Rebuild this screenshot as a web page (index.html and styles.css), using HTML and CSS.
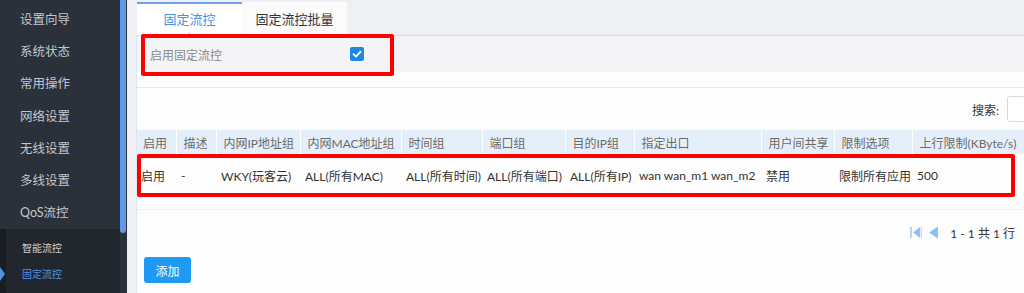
FILE: index.html
```html
<!DOCTYPE html>
<html lang="zh-CN">

<head>
    <meta charset="UTF-8">
    <meta name="viewport" content="width=device-width, initial-scale=1.0">
    <title>固定流控</title>
    <link rel="stylesheet" href="styles.css">
</head>

<body>
    <div class="layout">
        <aside class="sidebar">
            <ul class="menu">
                <li>设置向导</li>
                <li>系统状态</li>
                <li>常用操作</li>
                <li>网络设置</li>
                <li>无线设置</li>
                <li>多线设置</li>
                <li>QoS流控</li>
            </ul>
            <ul class="submenu">
                <li>智能流控</li>
                <li class="active">固定流控</li>
            </ul>
        </aside>
        <div class="scrollbar">
            <div class="thumb"></div>
        </div>

        <main class="main">
            <div class="tabs">
                <a href="#" class="tab active">固定流控</a>
                <a href="#" class="tab">固定流控批量</a>
            </div>

            <div class="panel">
                <div class="enable-row">
                    <label class="enable-label">启用固定流控</label>
                    <span class="checkbox">
                        <svg width="10" height="10" viewBox="0 0 10 10">
                            <path d="M1.5 5.2 L4 7.6 L8.6 2.6" fill="none" stroke="#fff" stroke-width="1.8" stroke-linecap="round" stroke-linejoin="round"/>
                        </svg>
                    </span>
                    <span class="mark mark-enable"></span>
                </div>

                <div class="table-box">
                    <div class="search">
                        <span>搜索:</span>
                        <input type="text" class="search-input">
                    </div>

                    <div class="table-wrap">
                        <table class="grid">
                            <colgroup>
                                <col style="width: 39px">
                                <col style="width: 40px">
                                <col style="width: 84px">
                                <col style="width: 101px">
                                <col style="width: 81px">
                                <col style="width: 83px">
                                <col style="width: 69px">
                                <col style="width: 127px">
                                <col style="width: 73px">
                                <col style="width: 78px">
                                <col style="width: 150px">
                            </colgroup>
                            <thead>
                                <tr>
                                    <th>启用</th>
                                    <th>描述</th>
                                    <th>内网IP地址组</th>
                                    <th>内网MAC地址组</th>
                                    <th>时间组</th>
                                    <th>端口组</th>
                                    <th>目的IP组</th>
                                    <th>指定出口</th>
                                    <th>用户间共享</th>
                                    <th>限制选项</th>
                                    <th>上行限制(KByte/s)</th>
                                </tr>
                            </thead>
                            <tbody>
                                <tr>
                                    <td>启用</td>
                                    <td>-</td>
                                    <td>WKY(玩客云)</td>
                                    <td>ALL(所有MAC)</td>
                                    <td>ALL(所有时间)</td>
                                    <td>ALL(所有端口)</td>
                                    <td>ALL(所有IP)</td>
                                    <td>wan wan_m1 wan_m2</td>
                                    <td>禁用</td>
                                    <td>限制所有应用</td>
                                    <td>500</td>
                                </tr>
                            </tbody>
                        </table>
                        <span class="mark mark-row"></span>
                    </div>

                    <div class="pager">
                        <svg class="pager-icon" width="13" height="13" viewBox="0 0 13 13">
                            <rect x="0" y="1" width="2" height="11" fill="#b3d6f6"/>
                            <path d="M3 6.5 L10 1 L10 12 Z" fill="#8cc2f2"/>
                            <rect x="10.5" y="1" width="1.5" height="11" fill="#c6e0f8"/>
                        </svg>
                        <svg class="pager-icon" width="10" height="13" viewBox="0 0 10 13">
                            <path d="M0 6.5 L9 0.5 L9 12.5 Z" fill="#8cc2f2"/>
                        </svg>
                        <span class="pager-text">1 - 1 共 1 行</span>
                    </div>

                    <button class="btn-add">添加</button>
                </div>
            </div>
        </main>
    </div>
</body>

</html>
```

FILE: styles.css
```css
html,
body {
    margin: 0;
    padding: 0;
    height: 293px;
    overflow: hidden;
    font-family: Lato, "Noto Sans CJK SC", sans-serif;
    font-size: 12px;
    color: #333;
}

.layout {
    display: flex;
    height: 293px;
}

/* left menu */
.sidebar {
    width: 120px;
    flex: none;
    display: flex;
    flex-direction: column;
    background-color: #2b313a;
}

.sidebar ul {
    list-style: none;
    margin: 0;
    padding: 0;
}

.menu {
    padding-top: 4px !important;
}

.menu li {
    height: 32.2px;
    line-height: 32.2px;
    padding-left: 20px;
    font-size: 12.5px;
    color: #c3c7cd;
}

.submenu {
    flex: 1;
    background-color: #22272e;
    border-left: 6px solid #1a1e23;
    padding-top: 6px !important;
}

.submenu li {
    position: relative;
    height: 26px;
    line-height: 26px;
    padding-left: 16px;
    font-size: 10px;
    color: #cdd0d5;
}

.submenu li.active {
    color: #4f93e3;
}

.submenu li.active::before {
    content: "";
    position: absolute;
    left: -6px;
    top: 6px;
    border-top: 7px solid transparent;
    border-bottom: 7px solid transparent;
    border-left: 5px solid #4f93e3;
}

.scrollbar {
    width: 7px;
    flex: none;
    background-color: #2b313a;
}

.thumb {
    width: 6px;
    height: 233px;
    background-color: #6197e8;
    border-radius: 0 0 3px 3px;
}

/* main area */
.main {
    flex: 1;
    min-width: 0;
    background-color: #eef0f4;
    padding-left: 9px;
    overflow: hidden;
}

.tabs {
    display: flex;
    margin: 2px 0 0 1px;
}

.tab {
    position: relative;
    width: 105px;
    height: 31px;
    line-height: 31px;
    text-align: center;
    font-size: 13px;
    color: #333;
    text-decoration: none;
    background-color: #fbfbfc;
    border-top: 2px solid transparent;
}

.tab.active {
    color: #4a8fe2;
    background-color: #fff;
    border-top-color: #6aa3ec;
}

.tab.active::after {
    content: "";
    position: absolute;
    left: 48px;
    bottom: -1px;
    border-left: 4px solid transparent;
    border-right: 4px solid transparent;
    border-bottom: 4px solid #dfe2e8;
}

.panel {
    background-color: #fdfdfd;
    border-top: 1px solid #cfdef4;
    border-left: 1px solid #dfe6f0;
    height: 260px;
}

.enable-row {
    position: relative;
    display: flex;
    align-items: center;
    height: 36px;
    padding-left: 13px;
    background-color: #f4f4f6;
}

.enable-label {
    width: 200px;
    color: #8a8a8a;
    font-size: 12px;
}

.checkbox {
    display: flex;
    align-items: center;
    justify-content: center;
    width: 14px;
    height: 14px;
    border-radius: 2px;
    background-color: #1f86e3;
}

.mark {
    position: absolute;
    border: 4px solid #ff0000;
    border-radius: 2px;
    box-sizing: border-box;
}

.mark-enable {
    left: 4px;
    top: -2px;
    width: 253px;
    height: 42px;
}

.table-box {
    margin-top: 15px;
    border-top: 1px solid #e2eaf5;
}

.search {
    display: flex;
    align-items: center;
    justify-content: flex-end;
    height: 42px;
    color: #333;
}

.search-input {
    width: 40px;
    height: 26px;
    box-sizing: border-box;
    margin: 0 -23px 0 8px;
    border: 1px solid #d6d9de;
    border-radius: 3px;
    background-color: #fff;
}

.table-wrap {
    position: relative;
}

.grid {
    border-collapse: collapse;
    table-layout: fixed;
    width: 925px;
}

.grid th {
    height: 24px;
    padding: 0 0 0 7px;
    text-align: left;
    font-weight: normal;
    color: #6b6b6b;
    background-color: #e5eff9;
    border-left: 1px solid #fff;
    white-space: nowrap;
}

.grid th:first-child {
    border-left: none;
    padding-left: 6px;
}

.grid td {
    height: 42px;
    padding: 0 0 0 5px;
    color: #333;
    white-space: nowrap;
}

.grid td:first-child {
    padding-left: 4px;
}

.mark-row {
    left: 0;
    top: 24px;
    width: 878px;
    height: 43px;
}

.pager {
    display: flex;
    align-items: center;
    justify-content: flex-end;
    gap: 6px;
    height: 44px;
    margin-top: 13px;
    padding-right: 9px;
    border-top: 1px solid #eef0f3;
}

.pager-icon {
    flex: none;
}

.pager-text {
    margin-left: 5px;
    color: #333;
}

.btn-add {
    display: block;
    margin: 3px 0 0 7px;
    width: 47px;
    height: 26px;
    border: none;
    border-radius: 3px;
    background-color: #1e9af5;
    color: #fff;
    font-family: inherit;
    font-size: 12px;
}
```
